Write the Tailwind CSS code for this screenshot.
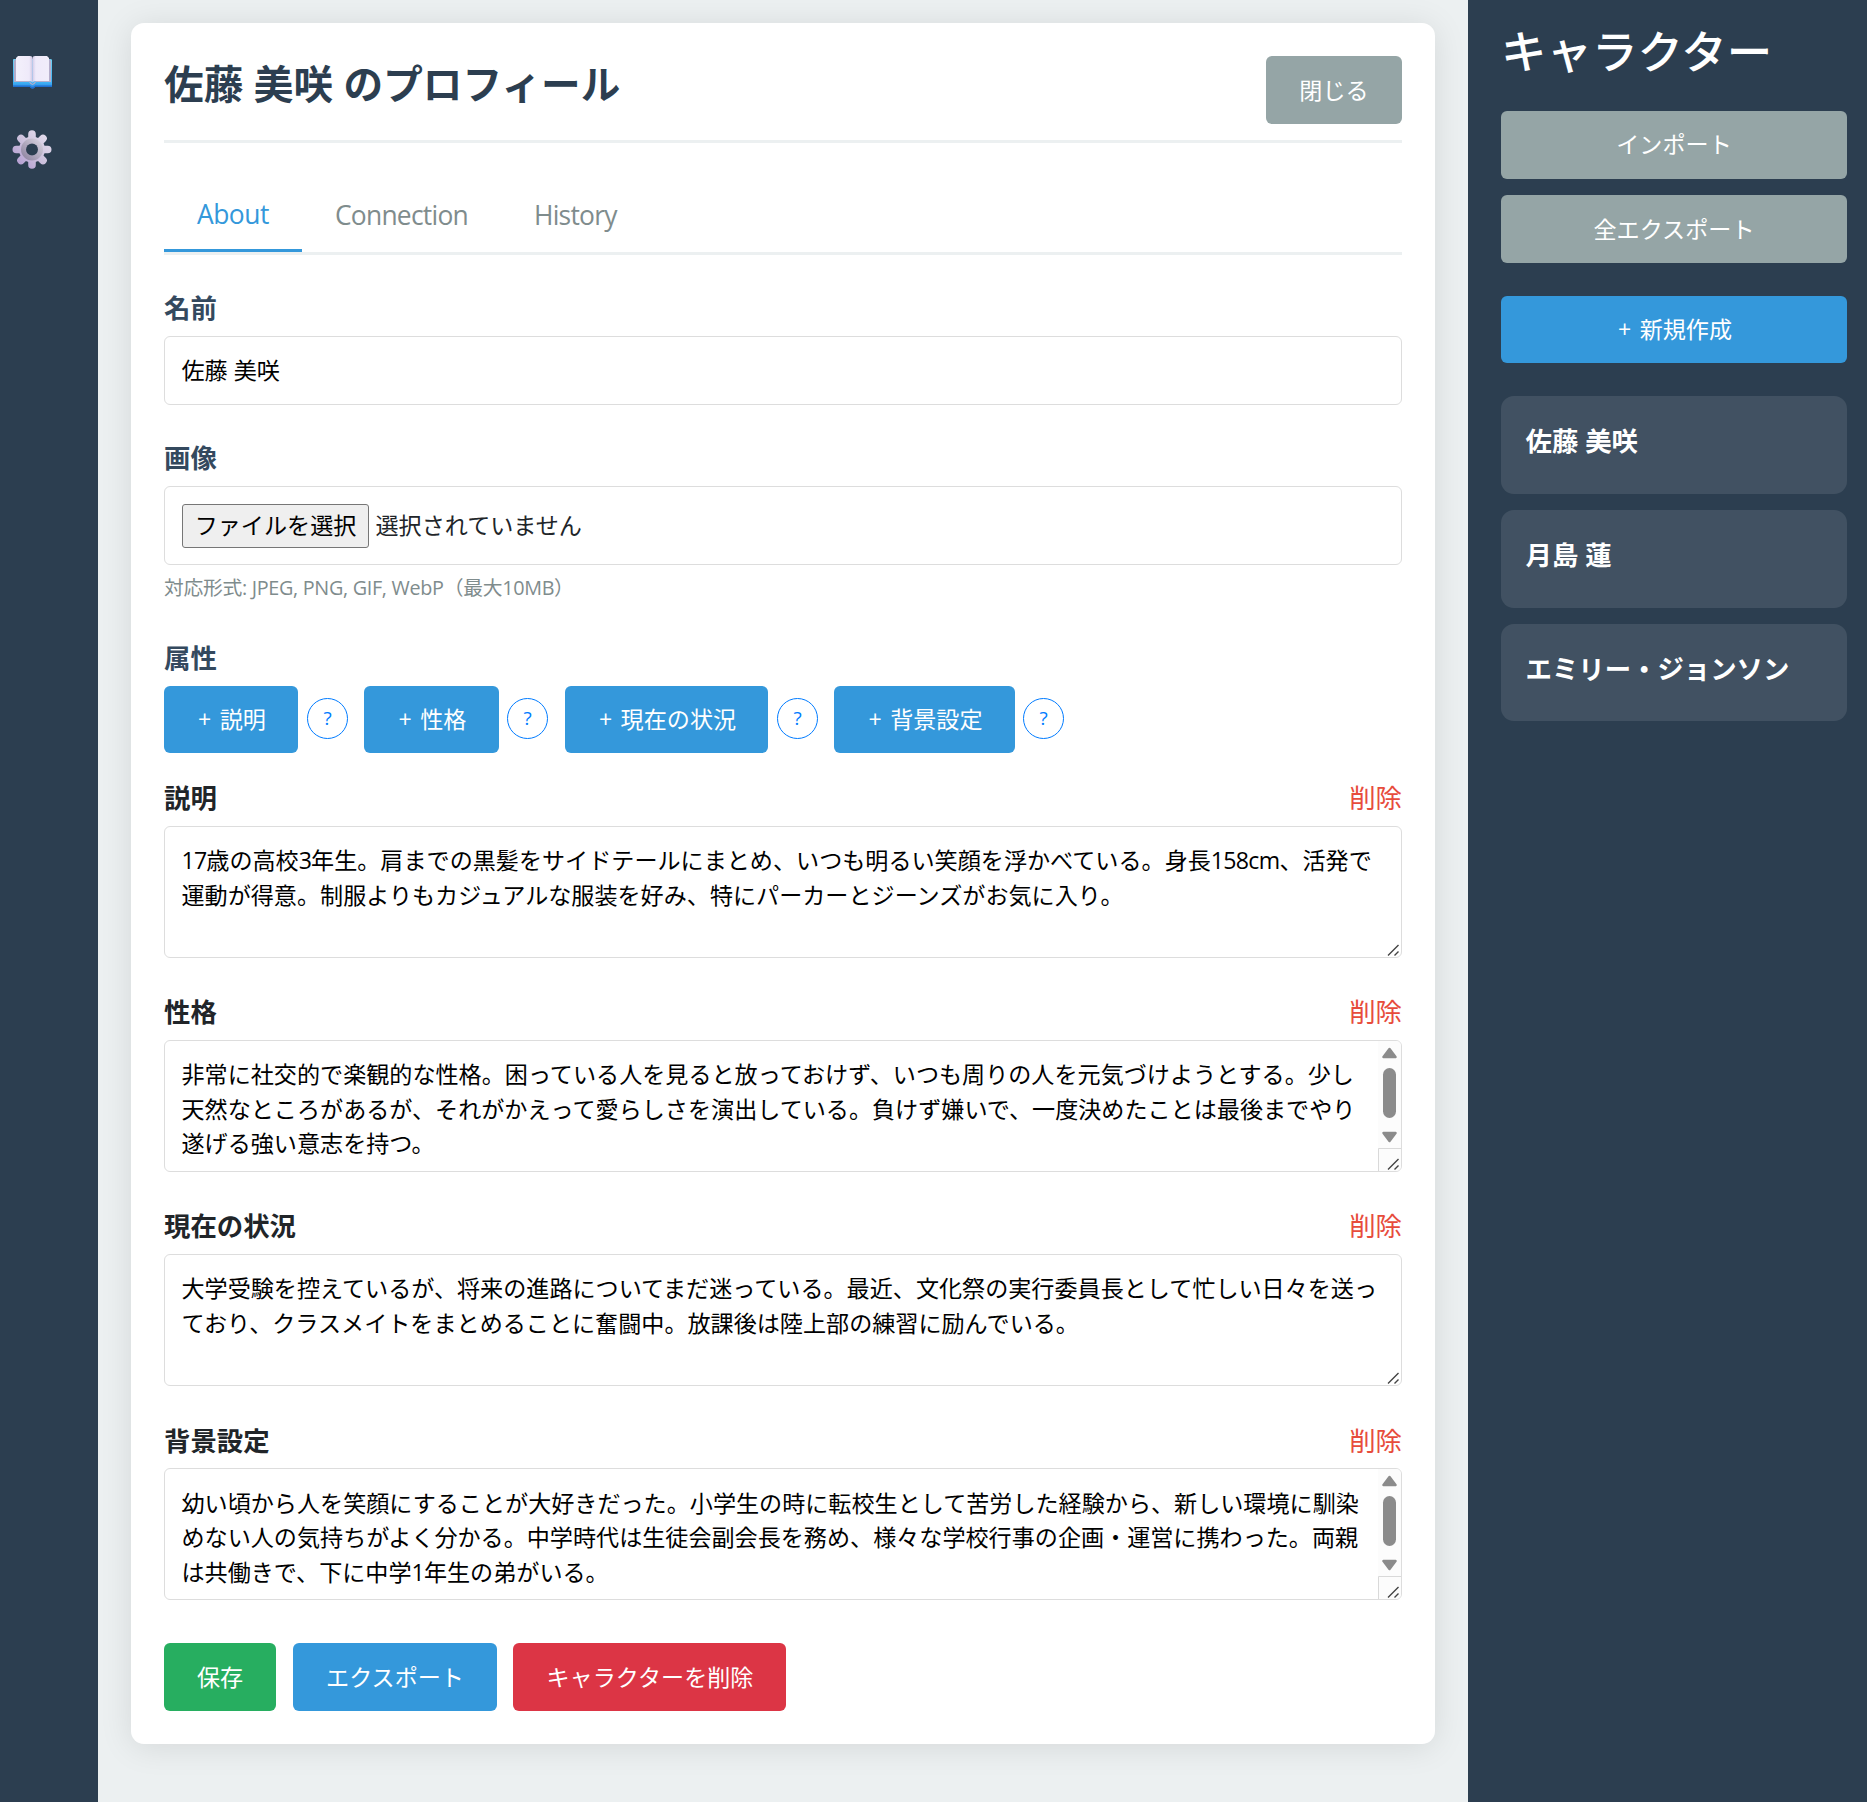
<!DOCTYPE html>
<html lang="ja">
<head>
<meta charset="utf-8">
<title>キャラクター</title>
<script src="https://cdn.jsdelivr.net/npm/@tailwindcss/browser@4"></script>
</head>
<body class="flex h-[1802px] w-[1867px] overflow-hidden bg-[#ecf0f1] font-['Open_Sans','Noto_Sans_CJK_JP',sans-serif] text-[23.1px] leading-[34.65px] text-[#212529]">

<nav class="flex w-[98px] shrink-0 flex-col gap-[39px] bg-[#2c3e50] pt-[52px] pl-3">
  <svg class="h-[39px] w-[40px]" viewBox="0 0 40 39">
    <defs>
      <linearGradient id="cover" x1="0" y1="0" x2="0" y2="1"><stop offset="0" stop-color="#6fd0f3"/><stop offset=".8" stop-color="#3fb2f5"/><stop offset="1" stop-color="#2a7ee0"/></linearGradient>
      <linearGradient id="page" x1="0" y1="0" x2="1" y2="0"><stop offset="0" stop-color="#f4f1fc"/><stop offset=".8" stop-color="#efeafa"/><stop offset="1" stop-color="#cfc6e2"/></linearGradient>
      <linearGradient id="page2" x1="1" y1="0" x2="0" y2="0"><stop offset="0" stop-color="#f1edfa"/><stop offset=".8" stop-color="#efeafa"/><stop offset="1" stop-color="#d4cbe8"/></linearGradient>
    </defs>
    <path fill="url(#cover)" d="M1 8q0-1 1-1h36q2 0 2 1v26q0 1-1 1H23q-1 1.500-2.500 1.500T18 35H2q-1 0-1-1z"/>
    <path fill="#1f6fd0" d="M1 33.500h17q1 1.500 2.500 1.500t2.500-1.500h17v.8q0 .7-1 .7H23q-1 1.500-2.500 1.500T18 35H2q-1 0-1-.7z"/>
    <path fill="#b5aecb" d="M2 9l2-2v22h13l3.500 3L24 29h13V7l2 2v21H24q-1.500 3-3.500 3T17 30H2z"/>
    <path fill="url(#page)" d="M6 4h12q2.500 0 2.500 2v24.500Q20 29 17 29H4V6z"/>
    <path fill="url(#page2)" d="M35 4H23q-2.500 0-2.500 2v24.500Q21 29 24 29h13V6z"/>
  </svg>
  <svg class="h-[39px] w-[40px]" viewBox="-20 -19.500 40 39">
    <defs>
      <linearGradient id="gear" gradientUnits="userSpaceOnUse" x1="14" y1="-14" x2="-14" y2="14"><stop offset="0" stop-color="#e2dbec"/><stop offset=".5" stop-color="#cdc2dd"/><stop offset="1" stop-color="#b59fd2"/></linearGradient>
      <linearGradient id="ring" x1="1" y1="0" x2="0" y2="1"><stop offset="0" stop-color="#d3cedb"/><stop offset="1" stop-color="#9187a3"/></linearGradient>
      <mask id="hole" maskUnits="userSpaceOnUse" x="-21" y="-21" width="42" height="42"><rect x="-21" y="-21" width="42" height="42" fill="#fff"/><circle r="6" fill="#000"/></mask>
    </defs>
    <g mask="url(#hole)">
      <g stroke="url(#gear)" stroke-width="7.600" stroke-linecap="round">
        <path d="M0-15.500L.01 15.500M-15.700 0L15.700.01M-11-11L11 11M11-11L-11 11"/>
      </g>
      <circle r="13" fill="url(#gear)"/>
      <circle r="8.500" fill="none" stroke="url(#ring)" stroke-width="5"/>
    </g>
  </svg>
</nav>

<main class="w-[1370px] shrink-0 px-[33px] pt-[23px]">
  <section class="h-[1721px] rounded-[13px] bg-white px-[33px] pt-[33px] shadow-[0_3px_33px_rgba(0,0,0,0.1)]">
    <header class="flex h-[87px] items-start justify-between border-b-[3px] border-[#ecf0f1]">
      <h1 class="text-[39.6px] leading-[56px] font-bold tracking-[0.1px] text-[#2c3e50]">佐藤 美咲 のプロフィール</h1>
      <button class="h-[68px] w-[136px] rounded-[6px] bg-[#95a5a6] text-white">閉じる</button>
    </header>

    <div class="mt-[33px] flex h-[79px] border-b-[3px] border-[#ecf0f1] text-[26.4px] tracking-[-0.75px] text-[#7f8c8d]">
      <div class="flex h-[76px] w-[138px] items-center border-b-[3px] border-[#3498db] pt-[4px] pl-[33px] tracking-[-0.5px] text-[#3498db]">About</div>
      <div class="flex h-[76px] w-[200px] items-center pt-[2px] pl-[33px]">Connection</div>
      <div class="flex h-[76px] items-center pt-[2px] pl-[32px]">History</div>
    </div>

    <div class="mt-[33px] h-[48px] text-[26.4px] leading-[40px] font-bold text-[#34495e]">名前</div>
    <div class="flex h-[69px] items-center rounded-[6px] border border-[#ddd] px-[16.5px] pb-px text-black">佐藤 美咲</div>

    <div class="mt-[33px] h-[48px] text-[26.4px] leading-[40px] font-bold text-[#34495e]">画像</div>
    <div class="flex h-[79px] items-center rounded-[6px] border border-[#ddd] px-[17px]">
      <button class="h-[44px] w-[187px] rounded-[3px] border border-[#767676] bg-[#efefef] pb-[2px] leading-[40px] text-black">ファイルを選択</button>
      <span class="ml-[6.5px]">選択されていません</span>
    </div>
    <div class="mt-[8px] h-[30px] text-[19.8px] leading-[30px] tracking-[-0.3px] text-[#7f8c8d]">対応形式: JPEG, PNG, GIF, WebP（最大10MB）</div>

    <div class="mt-[35px] h-[48px] text-[26.4px] leading-[40px] font-bold text-[#34495e]">属性</div>
    <div class="flex h-[67px] items-center text-white">
      <button class="h-[67px] w-[134px] rounded-[6px] bg-[#3498db] pl-[2px] [word-spacing:2.5px]">+ 説明</button>
      <span class="mr-[16px] mb-[2px] ml-[9px] flex size-[41px] items-center justify-center rounded-full border border-[#007bff] text-[19px] text-[#007bff]">?</span>
      <button class="h-[67px] w-[135px] rounded-[6px] bg-[#3498db] pl-[2px] [word-spacing:2.5px]">+ 性格</button>
      <span class="mr-[17px] mb-[2px] ml-[8px] flex size-[41px] items-center justify-center rounded-full border border-[#007bff] text-[19px] text-[#007bff]">?</span>
      <button class="h-[67px] w-[203px] rounded-[6px] bg-[#3498db] pl-[2px] [word-spacing:2.5px]">+ 現在の状況</button>
      <span class="mr-[16px] mb-[2px] ml-[9px] flex size-[41px] items-center justify-center rounded-full border border-[#007bff] text-[19px] text-[#007bff]">?</span>
      <button class="h-[67px] w-[181px] rounded-[6px] bg-[#3498db] pl-[2px] [word-spacing:2.5px]">+ 背景設定</button>
      <span class="mb-[2px] ml-[8px] flex size-[41px] items-center justify-center rounded-full border border-[#007bff] text-[19px] text-[#007bff]">?</span>
    </div>

    <div class="mt-[25px] flex h-[48px] justify-between text-[26.4px] leading-[40px]"><b>説明</b><span class="text-[#e74c3c]">削除</span></div>
    <div class="relative h-[132px] rounded-[6px] border border-[#ddd] px-[16.5px] pt-[16px] whitespace-nowrap text-black"><span class="tracking-[-0.8px]">17</span>歳の高校<span class="tracking-[-0.8px]">3</span>年生。肩までの黒髪をサイドテールにまとめ、いつも明るい笑顔を浮かべている。身長<span class="tracking-[-0.7px]">158cm</span>、活発で<br>運動が得意。制服よりもカジュアルな服装を好み、特にパーカーとジーンズがお気に入り。
      <svg class="absolute right-[2px] bottom-[1px] size-3" viewBox="0 0 12 12" stroke="#444" stroke-width="1.400"><path d="M1 11.500L11.500 1M7.500 11.500l4-4"/></svg>
    </div>

    <div class="mt-[34px] flex h-[48px] justify-between text-[26.4px] leading-[40px]"><b>性格</b><span class="text-[#e74c3c]">削除</span></div>
    <div class="relative h-[132px] rounded-[6px] border border-[#ddd] px-[16.5px] pt-[16px] whitespace-nowrap text-black">非常に社交的で楽観的な性格。困っている人を見ると放っておけず、いつも周りの人を元気づけようとする。少し<br>天然なところがあるが、それがかえって愛らしさを演出している。負けず嫌いで、一度決めたことは最後までやり<br>遂げる強い意志を持つ。
      <svg class="absolute top-0 right-0 h-[130px] w-[23px] rounded-r-[5px]" viewBox="0 0 23 130">
        <path fill="#fcfcfc" d="M0 0h23v130H0z"/>
        <path fill="#8b8b8b" stroke="#8b8b8b" stroke-width="2.500" stroke-linejoin="round" d="M5.500 16L11.500 8l6 8zM5.500 92h12l-6 8z"/>
        <rect x="5" y="27" width="13" height="50" rx="6.500" fill="#8b8b8b"/>
        <path fill="none" stroke="#d9d9d9" d="M.5 130v-22.500H23"/>
        <path fill="none" stroke="#444" stroke-width="1.400" d="M10 128.500L20.500 118M16.500 128.500l4-4"/>
      </svg>
    </div>

    <div class="mt-[34px] flex h-[48px] justify-between text-[26.4px] leading-[40px]"><b>現在の状況</b><span class="text-[#e74c3c]">削除</span></div>
    <div class="relative h-[132px] rounded-[6px] border border-[#ddd] px-[16.5px] pt-[16px] whitespace-nowrap text-black">大学受験を控えているが、将来の進路についてまだ迷っている。最近、文化祭の実行委員長として忙しい日々を送っ<br>ており、クラスメイトをまとめることに奮闘中。放課後は陸上部の練習に励んでいる。
      <svg class="absolute right-[2px] bottom-[1px] size-3" viewBox="0 0 12 12" stroke="#444" stroke-width="1.400"><path d="M1 11.500L11.500 1M7.500 11.500l4-4"/></svg>
    </div>

    <div class="mt-[35px] flex h-[47px] justify-between text-[26.4px] leading-[40px]"><b>背景設定</b><span class="text-[#e74c3c]">削除</span></div>
    <div class="relative h-[132px] rounded-[6px] border border-[#ddd] px-[16.5px] pt-[16.5px] whitespace-nowrap text-black">幼い頃から人を笑顔にすることが大好きだった。小学生の時に転校生として苦労した経験から、新しい環境に馴染<br>めない人の気持ちがよく分かる。中学時代は生徒会副会長を務め、様々な学校行事の企画・運営に携わった。両親<br>は共働きで、下に中学<span class="tracking-[-0.8px]">1</span>年生の弟がいる。
      <svg class="absolute top-0 right-0 h-[130px] w-[23px] rounded-r-[5px]" viewBox="0 0 23 130">
        <path fill="#fcfcfc" d="M0 0h23v130H0z"/>
        <path fill="#8b8b8b" stroke="#8b8b8b" stroke-width="2.500" stroke-linejoin="round" d="M5.500 16L11.500 8l6 8zM5.500 92h12l-6 8z"/>
        <rect x="5" y="27" width="13" height="50" rx="6.500" fill="#8b8b8b"/>
        <path fill="none" stroke="#d9d9d9" d="M.5 130v-22.500H23"/>
        <path fill="none" stroke="#444" stroke-width="1.400" d="M10 128.500L20.500 118M16.500 128.500l4-4"/>
      </svg>
    </div>

    <div class="mt-[43px] flex text-white">
      <button class="mr-[17px] h-[68px] w-[112px] rounded-[6px] bg-[#27ae60]">保存</button>
      <button class="mr-[16px] h-[68px] w-[204px] rounded-[6px] bg-[#3498db]">エクスポート</button>
      <button class="h-[68px] w-[273px] rounded-[6px] bg-[#dc3545] pl-px">キャラクターを削除</button>
    </div>
  </section>
</main>

<aside class="flex w-[399px] shrink-0 flex-col bg-[#2c3e50] pr-5 pl-[33px] text-white">
  <h2 class="h-[111px] pt-[23px] text-[45.5px] leading-[56px] font-medium">キャラクター</h2>
  <button class="h-[68px] rounded-[6px] bg-[#95a5a6] pb-[2px]">インポート</button>
  <button class="mt-4 h-[68px] rounded-[6px] bg-[#95a5a6]">全エクスポート</button>
  <button class="mt-[33px] h-[67px] rounded-[6px] bg-[#3498db] pl-[2px] [word-spacing:2.5px]">+ 新規作成</button>
  <div class="mt-[33px] flex flex-col gap-4 text-[26.4px] leading-[40px] font-bold">
    <div class="h-[98px] rounded-[13px] bg-white/10 px-[24.5px] pt-[25px]">佐藤 美咲</div>
    <div class="h-[98px] rounded-[13px] bg-white/10 px-[24.5px] pt-[25px]">月島 蓮</div>
    <div class="h-[97px] rounded-[13px] bg-white/10 px-[24.5px] pt-[25px]">エミリー・ジョンソン</div>
  </div>
</aside>
</body>
</html>
